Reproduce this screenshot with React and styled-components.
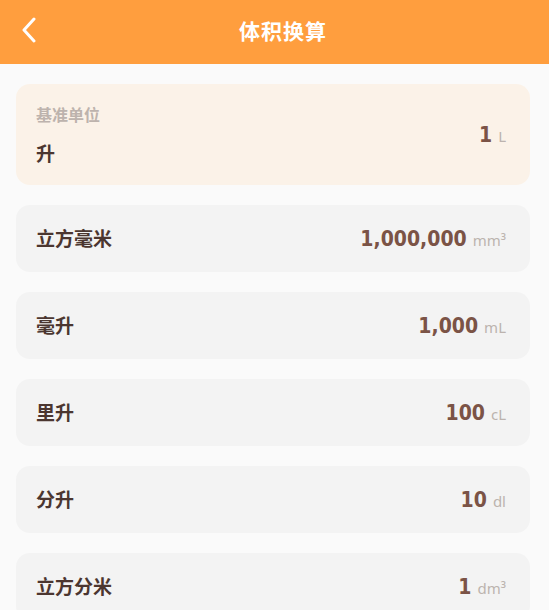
import React from 'react';
import styled, { createGlobalStyle } from 'styled-components';

const GlobalStyle = createGlobalStyle`
  html, body {
    margin: 0;
    padding: 0;
    background: #fafafa;
    font-family: "Noto Sans CJK SC", "Noto Sans", sans-serif;
  }
`;

const rows = [
  { name: '立方毫米', value: '1,000,000', unit: 'mm³' },
  { name: '毫升', value: '1,000', unit: 'mL' },
  { name: '里升', value: '100', unit: 'cL' },
  { name: '分升', value: '10', unit: 'dl' },
  { name: '立方分米', value: '1', unit: 'dm³' },
];

const App = () => {
  return (
    <>
      <GlobalStyle />
      <Page>
        <Header>
          <BackButton aria-label="back">
            <svg width="18" height="26" viewBox="0 0 18 26" fill="none">
              <path d="M14 2 L4 13 L14 24" stroke="#fff" strokeWidth="3" strokeLinecap="round" strokeLinejoin="round" />
            </svg>
          </BackButton>
          <Title>体积换算</Title>
        </Header>

        <List>
          <BaseCard>
            <BaseInfo>
              <BaseLabel>基准单位</BaseLabel>
              <UnitName>升</UnitName>
            </BaseInfo>
            <Amount>
              <Value>1</Value>
              <Unit>L</Unit>
            </Amount>
          </BaseCard>

          {rows.map((r) => (
            <Row key={r.name}>
              <UnitName>{r.name}</UnitName>
              <Amount>
                <Value>{r.value}</Value>
                <Unit>{r.unit}</Unit>
              </Amount>
            </Row>
          ))}
        </List>
      </Page>
    </>
  );
};

const Page = styled.div`
  width: 549px;
  height: 610px;
  overflow: hidden;
  background: #fafafa;
`;

const Header = styled.div`
  position: relative;
  height: 64px;
  background: #ff9e3e;
  display: flex;
  align-items: center;
  justify-content: center;
`;

const BackButton = styled.div`
  position: absolute;
  left: 20px;
  top: 17px;
  width: 18px;
  height: 26px;
  display: flex;
`;

const Title = styled.div`
  color: #fff;
  font-size: 21px;
  font-weight: 700;
  letter-spacing: 1px;
  margin: -4px 0 0 17px;
`;

const List = styled.div`
  padding: 20px 19px 0 16px;
  display: flex;
  flex-direction: column;
  gap: 20px;
`;

const BaseCard = styled.div`
  height: 101px;
  box-sizing: border-box;
  background: #fbf2e8;
  border-radius: 14px;
  padding: 0 24px 0 20px;
  display: flex;
  align-items: center;
  justify-content: space-between;
`;

const BaseInfo = styled.div`
  display: flex;
  flex-direction: column;
  gap: 18px;
`;

const BaseLabel = styled.div`
  color: #bdb3ad;
  font-size: 16px;
  font-weight: 700;
  line-height: 1.2;
`;

const Row = styled.div`
  height: 67px;
  box-sizing: border-box;
  background: #f3f3f3;
  border-radius: 14px;
  padding: 0 24px 0 20px;
  display: flex;
  align-items: center;
  justify-content: space-between;
`;

const UnitName = styled.div`
  color: #4b3630;
  font-size: 19px;
  font-weight: 700;
  line-height: 1.2;
`;

const Amount = styled.div`
  display: flex;
  align-items: baseline;
  gap: 6px;
`;

const Value = styled.span`
  color: #7b5346;
  font-family: "DejaVu Sans Condensed", "DejaVu Sans", sans-serif;
  font-size: 21px;
  font-weight: 700;
`;

const Unit = styled.span`
  color: #bcb3ae;
  font-family: "Noto Sans", sans-serif;
  font-size: 15px;
`;

export default App;
